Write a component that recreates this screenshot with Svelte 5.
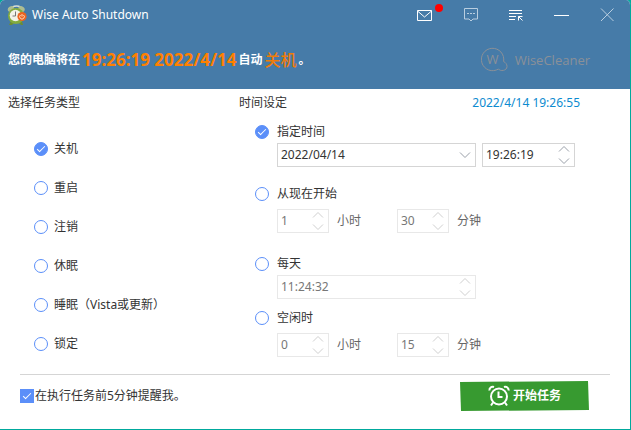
<script>
  let task = $state('shutdown');
  let mode = $state('at');
  let remind = $state(true);

  let date = $state('2022/04/14');
  let atTime = $state('19:26:19');
  let dailyTime = $state('11:24:32');
  let fromNow = $state({ hours: 1, minutes: 30 });
  let idle = $state({ hours: 0, minutes: 15 });

  const tasks = [
    { id: 'shutdown', label: '关机' },
    { id: 'restart', label: '重启' },
    { id: 'logoff', label: '注销' },
    { id: 'hibernate', label: '休眠' },
    { id: 'sleep', label: '睡眠（Vista或更新）' },
    { id: 'lock', label: '锁定' }
  ];

  let taskName = $derived(tasks.find((t) => t.id === task).label);

  // move a hh:mm:ss string by a number of seconds
  function shift(time, step) {
    const [h, m, s] = time.split(':').map(Number);
    const total = (h * 3600 + m * 60 + s + step + 86400) % 86400;
    return [Math.floor(total / 3600), Math.floor(total / 60) % 60, total % 60]
      .map((n) => String(n).padStart(2, '0'))
      .join(':');
  }

  function bump(target, key, step) {
    target[key] = Math.max(0, target[key] + step);
  }
</script>

{#snippet spinner(step, disabled)}
  <span class="spinner">
    <button type="button" aria-label="+" {disabled} onclick={() => step(1)}>
      <svg width="12" height="8" viewBox="0 0 12 8"><path d="M1 6.5 6 1.5l5 5" /></svg>
    </button>
    <button type="button" aria-label="-" {disabled} onclick={() => step(-1)}>
      <svg width="12" height="8" viewBox="0 0 12 8"><path d="M1 1.5l5 5 5-5" /></svg>
    </button>
  </span>
{/snippet}

{#snippet duration(target, id, disabled)}
  <div class="duration" class:disabled>
    <div class="field short">
      <input id="{id}-h" type="text" bind:value={target.hours} {disabled} />
      {@render spinner((n) => bump(target, 'hours', n), disabled)}
    </div>
    <label for="{id}-h">小时</label>
    <div class="field short">
      <input id="{id}-m" type="text" bind:value={target.minutes} {disabled} />
      {@render spinner((n) => bump(target, 'minutes', n), disabled)}
    </div>
    <label for="{id}-m">分钟</label>
  </div>
{/snippet}

<div class="window">
  <header>
    <div class="titlebar">
      <svg class="app-icon" width="20" height="22" viewBox="0 0 20 22">
        <path d="M4 5C5 1 14 1 15 5" fill="none" stroke="#d9dfd6" stroke-width="1.5" />
        <ellipse cx="4" cy="5" rx="3.4" ry="2.6" fill="#aebd92" transform="rotate(-35 4 5)" />
        <ellipse cx="14.5" cy="5" rx="3.4" ry="2.6" fill="#aebd92" transform="rotate(35 14.5 5)" />
        <path d="M4 17l-2 4h3l2-2M12 19l2 2h2l-1-4" fill="#6d8d32" />
        <circle cx="9" cy="12" r="8" fill="#83ab3e" />
        <circle cx="8.500" cy="11.500" r="5.800" fill="#f2f3e9" />
        <path d="M8.500 7.500v4.500H5.500" fill="none" stroke="#777" stroke-width="1" />
        <circle cx="15" cy="12.500" r="4.600" fill="#ed6420" />
        <path d="M13.500 11a2.300 2.300 0 1 0 3 0M15 10v2.600" fill="none" stroke="#ffd9bd" stroke-width="1" />
      </svg>
      <h1>Wise Auto Shutdown</h1>
      <div class="tools">
        <button type="button" aria-label="Mail">
          <svg width="20" height="20" viewBox="0 0 20 20"><path d="M4.500 5.500h14v10h-14zM4.500 6l7 6 7-6" /></svg>
          <span class="dot"></span>
        </button>
        <button type="button" aria-label="Feedback" class="dim">
          <svg width="20" height="20" viewBox="0 0 20 20">
            <path d="M5.500 3.500h13v10.500h-4.500l-2 2-2-2h-4.500z" />
            <path d="M8 8.500h2M11 8.500h2M14 8.500h2" />
          </svg>
        </button>
        <button type="button" aria-label="Menu">
          <svg width="20" height="20" viewBox="0 0 20 20">
            <path d="M4 5.500h13M4 8.500h13M4 11.500h7M4 14.500h6" />
            <path d="M13.500 15.500v-4h4M13.500 11.500l4 4" />
          </svg>
        </button>
        <button type="button" aria-label="Minimize">
          <svg width="20" height="20" viewBox="0 0 20 20"><path d="M3 10.500h15" /></svg>
        </button>
        <button type="button" aria-label="Close" class="dim">
          <svg width="20" height="20" viewBox="0 0 20 20"><path d="M4 3.500l12.500 12.500M16.500 3.500l-12.500 12.500" /></svg>
        </button>
      </div>
    </div>

    <div class="banner">
      <p>
        您的电脑将在<span class="when">19:26:19 2022/4/14</span>自动<span class="what">{taskName}</span>。
      </p>
      <div class="brand">
        <svg width="28" height="26" viewBox="0 0 28 26">
          <path d="M22.600 14.500A11.200 11.200 0 1 0 17.500 22C19 24.500 26 24 26 19.500C26 17 24.500 15.500 22.600 14.500" />
          <text x="11.500" y="17" text-anchor="middle">W</text>
        </svg>
        <span>WiseCleaner</span>
      </div>
    </div>
  </header>

  <main>
    <section>
      <h2 class="tasks-title">选择任务类型</h2>
      <div class="task-list">
        {#each tasks as t (t.id)}
          <label class="option">
            <input type="radio" name="task" value={t.id} bind:group={task} />
            {t.label}
          </label>
        {/each}
      </div>
    </section>

    <section class="times">
      <div class="times-head">
        <h2>时间设定</h2>
        <time>2022/4/14 19:26:55</time>
      </div>

      <div class="group">
        <label class="option">
          <input type="radio" name="mode" value="at" bind:group={mode} />
          指定时间
        </label>
        <div class="fields">
          <div class="field" class:disabled={mode !== 'at'}>
            <select aria-label="日期" bind:value={date} disabled={mode !== 'at'}>
              <option>2022/04/14</option>
              <option>2022/04/15</option>
            </select>
            <svg class="chevron" width="12" height="8" viewBox="0 0 12 8"><path d="M1 1.500l5 5 5-5" /></svg>
          </div>
          <div class="field" class:disabled={mode !== 'at'}>
            <input type="text" aria-label="时间" bind:value={atTime} disabled={mode !== 'at'} />
            {@render spinner((n) => (atTime = shift(atTime, n)), mode !== 'at')}
          </div>
        </div>
      </div>

      <div class="group wide">
        <label class="option">
          <input type="radio" name="mode" value="from" bind:group={mode} />
          从现在开始
        </label>
        {@render duration(fromNow, 'from', mode !== 'from')}
      </div>

      <div class="group daily">
        <label class="option">
          <input type="radio" name="mode" value="daily" bind:group={mode} />
          每天
        </label>
        <div class="fields" class:disabled={mode !== 'daily'}>
          <div class="field">
            <input type="text" aria-label="每天时间" bind:value={dailyTime} disabled={mode !== 'daily'} />
            {@render spinner((n) => (dailyTime = shift(dailyTime, n)), mode !== 'daily')}
          </div>
        </div>
      </div>

      <div class="group wide last">
        <label class="option">
          <input type="radio" name="mode" value="idle" bind:group={mode} />
          空闲时
        </label>
        {@render duration(idle, 'idle', mode !== 'idle')}
      </div>
    </section>
  </main>

  <footer>
    <label class="remind">
      <input type="checkbox" bind:checked={remind} />
      在执行任务前5分钟提醒我。
    </label>
    <button type="button" class="start">
      <svg width="22" height="22" viewBox="0 0 22 22">
        <circle cx="11" cy="11.500" r="8" />
        <path d="M10.500 6.500v5.500h4" />
        <path d="M5 17.500l-2 3M17 17.500l2 3" />
        <path d="M1.500 5.500C1 3 3.500 1 6 2M20.500 5.500C21 3 18.500 1 16 2" />
      </svg>
      开始任务
    </button>
  </footer>
</div>

<style>
  :global(body) {
    margin: 0;
    background: #00a99d;
  }
  .window {
    --blue: #5b8ff9;
    box-sizing: border-box;
    min-height: 100vh;
    display: flex;
    flex-direction: column;
    border: solid #00a99d;
    border-width: 0 1px 1px 0;
    border-radius: 5px 5px 0 0;
    overflow: hidden;
    background: #fff;
    color: #333;
    font-family: "Noto Sans", "Noto Sans CJK SC", sans-serif;
    font-size: 12px;
    line-height: 18px;
  }
  h1, h2, p {
    margin: 0;
    font-size: 12px;
    font-weight: 400;
  }
  button, input, select {
    margin: 0;
    padding: 0;
    border: 0;
    background: none;
    color: inherit;
    font: inherit;
  }
  svg {
    display: block;
    fill: none;
    stroke: currentColor;
  }

  /* Header */
  header {
    background: #467ba8;
    color: #fff;
  }
  .titlebar {
    display: flex;
    align-items: center;
    height: 30px;
    padding-left: 7px;
  }
  .app-icon {
    stroke: none;
  }
  h1 {
    margin-left: 5px;
  }
  .tools {
    display: flex;
    margin-left: auto;
  }
  .tools button {
    display: grid;
    place-items: center;
    position: relative;
    width: 46px;
    height: 30px;
  }
  .tools .dim {
    color: #b9cee0;
  }
  .dot {
    position: absolute;
    top: 4px;
    right: 3px;
    width: 8px;
    height: 8px;
    border-radius: 50%;
    background: #f00;
  }
  .banner {
    display: flex;
    align-items: center;
    justify-content: space-between;
    height: 59px;
    padding: 0 40px 0 8px;
  }
  .banner p {
    display: flex;
    align-items: center;
    font-weight: 700;
    white-space: nowrap;
  }
  .when {
    margin: 0 2px;
    color: #ff8000;
    font-size: 17px;
  }
  .what {
    margin: 0 2px;
    color: #f07c0a;
    font-size: 16px;
    font-weight: 500;
  }
  .brand {
    display: flex;
    align-items: center;
    gap: 6px;
    color: #8a9098;
    font-family: "Open Sans", sans-serif;
    font-size: 13px;
  }
  .brand text {
    fill: currentColor;
    stroke: none;
  }

  /* Main */
  main {
    flex: 1;
    display: grid;
    grid-template-columns: 239px 1fr;
    padding: 5px 0 17px;
  }
  .tasks-title {
    padding-left: 8px;
  }
  .task-list {
    display: flex;
    flex-direction: column;
    gap: 21px;
    padding: 28px 0 0 34px;
  }
  .option, .remind {
    display: flex;
    align-items: center;
  }
  .option {
    gap: 6px;
  }
  .times {
    padding-right: 55px;
  }
  .times-head {
    display: flex;
    justify-content: space-between;
    margin-right: -5px;
    padding-bottom: 11px;
  }
  time {
    color: #0c8bd0;
  }
  input[type='radio'], input[type='checkbox'] {
    appearance: none;
    box-sizing: border-box;
    display: grid;
    place-items: center;
    width: 14px;
    height: 14px;
    border: 1px solid var(--blue);
  }
  input[type='radio'] {
    border-radius: 50%;
  }
  input:checked {
    background: var(--blue);
  }
  input:checked::after {
    content: '';
    width: 7px;
    height: 3px;
    margin-bottom: 3px;
    border: solid #fff;
    border-width: 0 0 1px 1px;
    transform: rotate(-45deg);
  }

  .group {
    display: flex;
    flex-direction: column;
    gap: 2px;
    margin-bottom: 18px;
    padding-left: 16px;
  }
  .group .option {
    gap: 8px;
  }
  .group.wide {
    gap: 6px;
    margin-bottom: 22px;
  }
  .group.daily {
    margin-bottom: 10px;
  }
  .group.last {
    margin-bottom: 0;
  }
  .fields {
    display: grid;
    grid-template-columns: 1fr 93px;
    gap: 6px;
    padding-left: 22px;
  }
  .field {
    box-sizing: border-box;
    display: flex;
    align-items: center;
    height: 24px;
    padding: 0 4px 0 3px;
    border: 1px solid #d5d5d5;
    color: #333;
  }
  .field input, .field select {
    flex: 1;
    min-width: 0;
    height: 22px;
    appearance: none;
    outline: none;
  }
  .field input {
    height: 20px;
    padding-bottom: 2px;
  }
  .field select:disabled {
    opacity: 1;
  }
  .chevron, .spinner {
    color: #999fa8;
  }
  .spinner {
    display: flex;
    flex-direction: column;
    gap: 4px;
  }
  .spinner button {
    display: block;
  }
  .duration {
    display: flex;
    align-items: center;
    padding-left: 22px;
  }
  .duration label {
    width: 60px;
    padding-left: 8px;
    color: #666;
  }
  .short {
    width: 52px;
  }
  .disabled .field, .field.disabled {
    border-color: #e8e8e8;
    color: #777;
  }
  .disabled .spinner {
    color: #d0d0d0;
  }

  /* Footer */
  footer {
    display: flex;
    align-items: center;
    justify-content: space-between;
    height: 42px;
    margin: 0 20px;
    padding: 0 21px 12px 0;
    border-top: 1px solid #d5d5d5;
  }
  .remind {
    gap: 1px;
  }
  .start {
    display: flex;
    align-items: center;
    justify-content: center;
    gap: 3px;
    width: 129px;
    height: 30px;
    background: #379a30;
    color: #fff;
    font-weight: 700;
    clip-path: polygon(0 1px, 128px 0, 100% 29px, 1px 100%);
  }
  .start svg {
    stroke-width: 2;
  }
</style>
